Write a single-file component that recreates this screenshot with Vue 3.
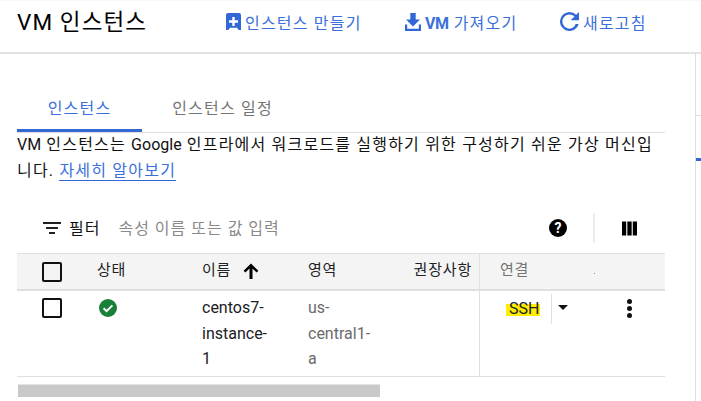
<template>
  <div class="page">
    <div class="content">
      <!-- 상단 헤더 -->
      <header class="topbar">
        <h1 class="title">VM 인스턴스</h1>
        <a class="action create">
          <svg class="create-icon" viewBox="0 0 15 17"><path fill="#3367d6" fill-rule="evenodd" d="M2 0h11a2 2 0 0 1 2 2v15h-2.400l-1.500-2.200H3.900L2.400 17H0V2a2 2 0 0 1 2-2zM6.300 4v3.300H3v2.400h3.300V13h2.400V9.700H12V7.300H8.700V4z"/></svg>
          <span>인스턴스 만들기</span>
        </a>
        <a class="action import">
          <svg class="import-icon" viewBox="0 0 16 18"><path fill="#3367d6" d="M5.300 0h5.400v6.500H15l-7 7-7-7h4.300zM0 11.500h2.200v4.300h11.600v-4.300H16V18H0z"/></svg>
          <span><b>VM</b> 가져오기</span>
        </a>
        <a class="action refresh">
          <svg class="refresh-icon" viewBox="4 4 16 16"><path fill="#3367d6" d="M17.650 6.350A7.960 7.960 0 0 0 12 4a8 8 0 1 0 7.730 10h-2.600A5.990 5.990 0 0 1 12 18a6 6 0 1 1 0-12c1.660 0 3.140.69 4.220 1.780L13 11h7V4z"/></svg>
          <span>새로고침</span>
        </a>
      </header>

      <div class="main">
        <!-- 탭 -->
        <div class="tabs">
          <div class="tab active">인스턴스</div>
          <div class="tab">인스턴스 일정</div>
        </div>

        <p class="intro"><span class="latin">VM</span> 인스턴스는 <span class="latin">Google</span> 인프라에서 워크로드를 실행하기 위한 구성하기 쉬운 가상 머신입니다. <a class="more">자세히 알아보기</a></p>

        <!-- 필터 -->
        <div class="filter">
          <svg class="filter-icon" viewBox="0 0 18 12"><path fill="#202124" d="M0 0h18v2H0zM3 5h12v2H3zM6 10h6v2H6z"/></svg>
          <span class="filter-label">필터</span>
          <span class="filter-hint">속성 이름 또는 값 입력</span>
          <svg class="help" viewBox="0 0 18 18">
            <circle cx="9" cy="9" r="9" fill="#000"/>
            <text x="9" y="13.800" text-anchor="middle" class="help-mark">?</text>
          </svg>
          <span class="filter-sep"></span>
          <svg class="columns" viewBox="0 0 16 15"><path fill="#000" d="M0 0h4.500v15H0zM5.700 0h4.600v15H5.700zM11.500 0H16v15h-4.500z"/></svg>
        </div>

        <!-- 테이블 -->
        <div class="table">
          <div class="row head">
            <div class="cell c-check"><span class="checkbox"></span></div>
            <div class="cell c-status">상태</div>
            <div class="cell c-name">이름
              <svg class="sort" viewBox="0 0 16 16"><path fill="#000" d="M6.500 16V5.500L2.400 9.600.6 7.800 8 .4l7.400 7.400-1.800 1.800-4.100-4.100V16z"/></svg>
            </div>
            <div class="cell c-zone">영역</div>
            <div class="cell c-rec">권장사항</div>
            <div class="cell c-conn muted">연결<span class="dot"></span></div>
          </div>
          <div class="row body">
            <div class="cell c-check"><span class="checkbox"></span></div>
            <div class="cell c-status">
              <svg class="ok" viewBox="0 0 18 18">
                <circle cx="9" cy="9" r="9" fill="#188038"/>
                <path fill="none" stroke="#fff" stroke-width="2" d="M4.600 9.200l3 3 5.800-5.800"/>
              </svg>
            </div>
            <div class="cell c-name">centos7-<br>instance-<br>1</div>
            <div class="cell c-zone muted">us-<br>central1-<br>a</div>
            <div class="cell c-rec"></div>
            <div class="cell c-conn">
              <span class="ssh">SSH</span>
              <span class="ssh-sep"></span>
              <span class="caret"></span>
              <span class="kebab"><i></i><i></i><i></i></span>
            </div>
          </div>
        </div>
        <div class="scroll"><div class="thumb"></div></div>
      </div>
    </div>

    <!-- 오른쪽 패널 가장자리 -->
    <aside class="edge">
      <span class="tick"></span>
      <span class="mark"></span>
    </aside>
  </div>
</template>

<script setup>
</script>

<style>
html, body {
  margin: 0;
  background: #fff;
  overflow: hidden;
}
</style>

<style scoped>
.page {
  width: 701px;
  height: 401px;
  overflow: hidden;
  font-family: Roboto, "Noto Sans CJK KR", sans-serif;
  font-size: 16px;
  color: #202124;
}
.topbar {
  display: flex;
  align-items: center;
  height: 51px;
  border-top: 1px solid #f8f8f8;
  border-bottom: 2px solid #e4e4e4;
  padding-left: 17px;
}
.title {
  margin: 0 0 10px;
  width: 209px;
  font-size: 22.500px;
  letter-spacing: 1.100px;
  font-weight: 400;
  color: #000;
  line-height: 30px;
  white-space: nowrap;
}
.action {
  display: flex;
  align-items: center;
  color: #3b6fdb;
  font-size: 16px;
  letter-spacing: 1.200px;
  margin-bottom: 10px;
  white-space: nowrap;
}
.action b { font-weight: 700; letter-spacing: -.5px; }
.create { width: 179px; }
.import { width: 155px; }
.create-icon { width: 15px; height: 17px; margin-right: 4px; }
.import-icon { width: 16px; height: 18px; margin-right: 4px; }
.refresh-icon { width: 19px; height: 19px; margin-right: 4px; }
.main { padding-left: 17px; }
.tabs {
  display: flex;
  width: 648px;
  height: 78px;
  align-items: flex-end;
  border-bottom: 1px solid #e0e0e0;
}
.tab {
  width: 125px;
  height: 37px;
  box-sizing: border-box;
  text-align: center;
  color: #757575;
  letter-spacing: 1.200px;
  line-height: 28px;
}
.tab + .tab { width: 135px; padding-left: 26px; }
.tab.active {
  color: #3b6fdb;
  border-bottom: 3px solid #3367d6;
}
.intro {
  width: 640px;
  margin: -1px 0 0;
  height: 81px;
  font-size: 16px;
  letter-spacing: 1.200px;
  line-height: 26px;
  color: #111;
  word-break: break-all;
}
.latin { letter-spacing: 0; }
.more {
  color: #3b6fdb;
  border-bottom: 1px solid #3367d6;
}
.filter {
  display: flex;
  align-items: center;
  width: 648px;
  height: 40px;
  padding: 0 0 10px 26px;
  box-sizing: border-box;
}
.filter-icon { width: 18px; height: 12px; }
.filter-label { margin: 0 0 2px 8px; letter-spacing: 1px; color: #111; }
.filter-hint { margin: 0 0 2px 18px; color: #8a8a8a; letter-spacing: 1px; }
.help { width: 18px; height: 18px; margin-left: auto; }
.help-mark { fill: #fff; font: 700 14px Roboto, sans-serif; }
.filter-sep {
  width: 2px;
  height: 30px;
  background: #ececec;
  margin: 0 27px 0 26px;
}
.columns { width: 15px; height: 15px; margin-right: 28px; }
.table { width: 648px; }
.row {
  display: grid;
  grid-template-columns: 80px 105px 106px 88px 76px 193px;
}
.head {
  height: 35px;
  background: #f4f4f4;
  border-top: 1px solid #e0e0e0;
  border-bottom: 2px solid #e0e0e0;
  line-height: 33px;
}
.body {
  height: 85px;
  border-bottom: 1px solid #e0e0e0;
  line-height: 25.500px;
}
.cell { box-sizing: border-box; position: relative; }
.head .cell { font-size: 15px; letter-spacing: .8px; color: #222; }
.body .cell { padding-top: 4px; }
.head .muted { color: #757575; }
.body .muted { color: #6b6b6b; }
.c-check { padding-left: 25px; }
.c-rec { text-align: right; }
.c-conn {
  margin-left: 7px;
  border-left: 1px solid #e0e0e0;
  padding-left: 20px;
  display: flex;
  align-items: flex-start;
}
.checkbox {
  display: block;
  width: 16px;
  height: 16px;
  border: 2px solid #111;
  border-radius: 2px;
  margin-top: 8px;
}
.body .checkbox { margin-top: 3px; }
.ok { display: block; width: 18px; height: 18px; margin: 4px 0 0 2px; }
.sort { width: 16px; height: 16px; margin-left: 7px; vertical-align: -4px; }
.dot {
  position: absolute;
  left: 114px;
  top: 19px;
  width: 1px;
  height: 1px;
  background: #d9822b;
}
.ssh {
  background: linear-gradient(#fff 0 7px, #ffee00 7px 19px, #fff 19px);
  height: 24px;
  line-height: 24px;
  margin: 6px 0 0 6px;
  padding-left: 3px;
  width: 31px;
  font-size: 16px;
  color: #202124;
}
.body .c-conn { padding-top: 0; }
.ssh-sep {
  width: 1px;
  height: 30px;
  background: #e0e0e0;
  margin: 3px 0 0 11px;
}
.caret {
  width: 0;
  height: 0;
  border-left: 5px solid transparent;
  border-right: 5px solid transparent;
  border-top: 5px solid #111;
  margin: 14px 0 0 6px;
}
.kebab {
  display: flex;
  flex-direction: column;
  gap: 2px;
  margin: 8px 0 0 59px;
}
.kebab i {
  display: block;
  width: 5px;
  height: 5px;
  border-radius: 50%;
  background: #111;
}
.scroll { width: 648px; height: 14px; margin-top: 7px; }
.thumb {
  width: 362px;
  height: 12px;
  margin-left: 1px;
  background: #c9c9c9;
  border-top: 1px solid #e4e4e4;
}
.edge {
  position: absolute;
  left: 695px;
  top: 53px;
  width: 6px;
  height: 348px;
  border-left: 1px solid #e0e0e0;
  box-sizing: border-box;
}
.tick {
  position: absolute;
  left: 0;
  right: 0;
  top: 62px;
  height: 1px;
  background: #e0e0e0;
}
.mark {
  position: absolute;
  left: 0;
  right: 0;
  top: 105px;
  height: 3px;
  background: #3367d6;
}
</style>
